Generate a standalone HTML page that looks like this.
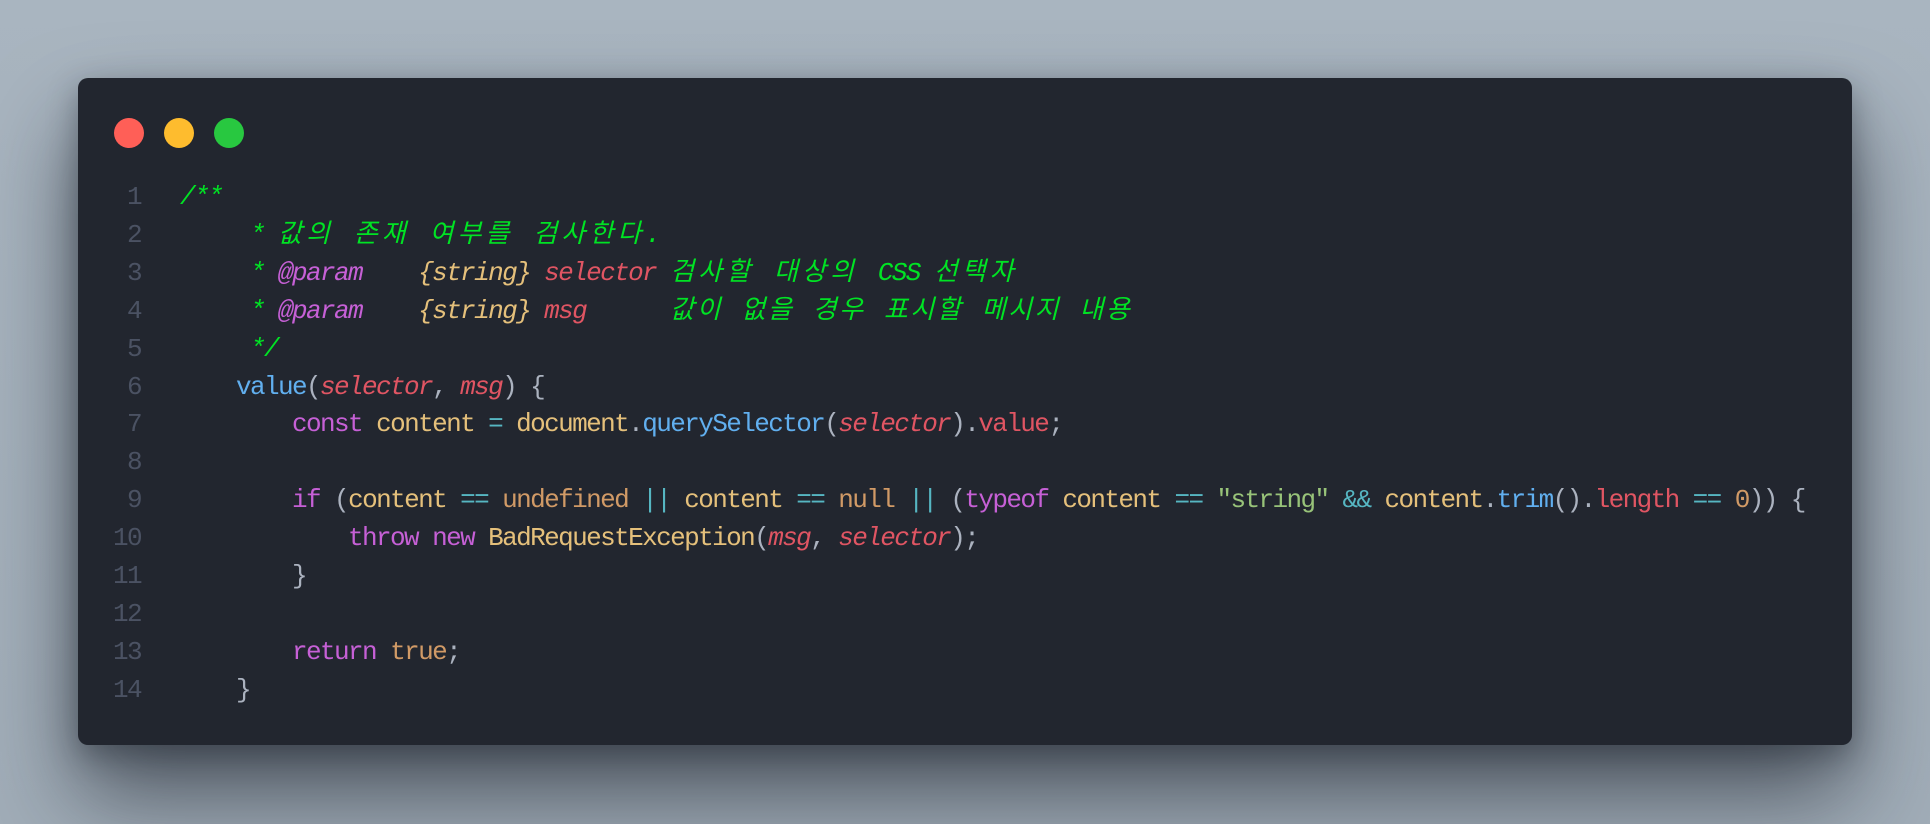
<!DOCTYPE html>
<html><head><meta charset="utf-8"><style>
html,body{margin:0;padding:0}
body{width:1930px;height:824px;overflow:hidden;background:linear-gradient(180deg,#a9b5c0 0%,#a1adb8 100%);position:relative}
.win{position:absolute;left:78px;top:78px;width:1774px;height:667px;background:#22262f;border-radius:10px;box-shadow:0 50px 90px rgba(20,25,35,.6),0 10px 30px rgba(20,25,35,.35)}
.dot{position:absolute;top:118px;width:30px;height:30px;border-radius:50%}
.code{position:absolute;left:0;top:179px;font-family:"Liberation Mono","Noto Sans CJK KR",monospace;font-size:26px;letter-spacing:-1.6px;line-height:37.9px;white-space:pre;color:#abb2bf}
.ln{position:absolute;left:80px;width:61px;text-align:right;color:#4b5263;top:179px;font-family:"Liberation Mono",monospace;font-size:26px;letter-spacing:-1.6px;line-height:37.9px;white-space:pre}
.src{position:absolute;left:180px}
.k{letter-spacing:4.1px}
.k2{letter-spacing:2.6px}
.c{color:#00e324;font-style:italic}
.p{color:#c660d6;font-style:italic}
.t{color:#e5c07b;font-style:italic}
.r{color:#e05563;font-style:italic}
.f{color:#61afef}
.kw{color:#c660d6}
.y{color:#e5c07b}
.o{color:#56b6c2}
.n{color:#d19a66}
.s{color:#98c379}
.rr{color:#e05563}
</style></head><body>
<div class="win"></div>
<div class="dot" style="left:114px;background:#ff5f57"></div>
<div class="dot" style="left:164px;background:#febc2e"></div>
<div class="dot" style="left:214px;background:#28c840"></div>
<div class="ln">1
2
3
4
5
6
7
8
9
10
11
12
13
14</div>
<div class="code"><div class="src"><span class="c">/**</span>
<span class="c">     * <span class="k">값의 존재 여부를 검사한다</span>.</span>
<span class="c">     * <span class="p">@param</span>    <span class="t">{string}</span> <span class="r">selector</span> <span class="k">검사할 대상의 </span>CSS <span class="k">선택자</span></span>
<span class="c">     * <span class="p">@param</span>    <span class="t">{string}</span> <span class="r">msg</span>      <span class="k2">값이 없을 경우 표시할 메시지 내용</span></span>
<span class="c">     */</span>
    <span class="f">value</span>(<span class="r">selector</span>, <span class="r">msg</span>) {
        <span class="kw">const</span> <span class="y">content</span> <span class="o">=</span> <span class="y">document</span>.<span class="f">querySelector</span>(<span class="r">selector</span>).<span class="rr">value</span>;

        <span class="kw">if</span> (<span class="y">content</span> <span class="o">==</span> <span class="n">undefined</span> <span class="o">||</span> <span class="y">content</span> <span class="o">==</span> <span class="n">null</span> <span class="o">||</span> (<span class="kw">typeof</span> <span class="y">content</span> <span class="o">==</span> <span class="s">"string"</span> <span class="o">&amp;&amp;</span> <span class="y">content</span>.<span class="f">trim</span>().<span class="rr">length</span> <span class="o">==</span> <span class="n">0</span>)) {
            <span class="kw">throw</span> <span class="kw">new</span> <span class="y">BadRequestException</span>(<span class="r">msg</span>, <span class="r">selector</span>);
        }

        <span class="kw">return</span> <span class="n">true</span>;
    }</div></div>
</body></html>
